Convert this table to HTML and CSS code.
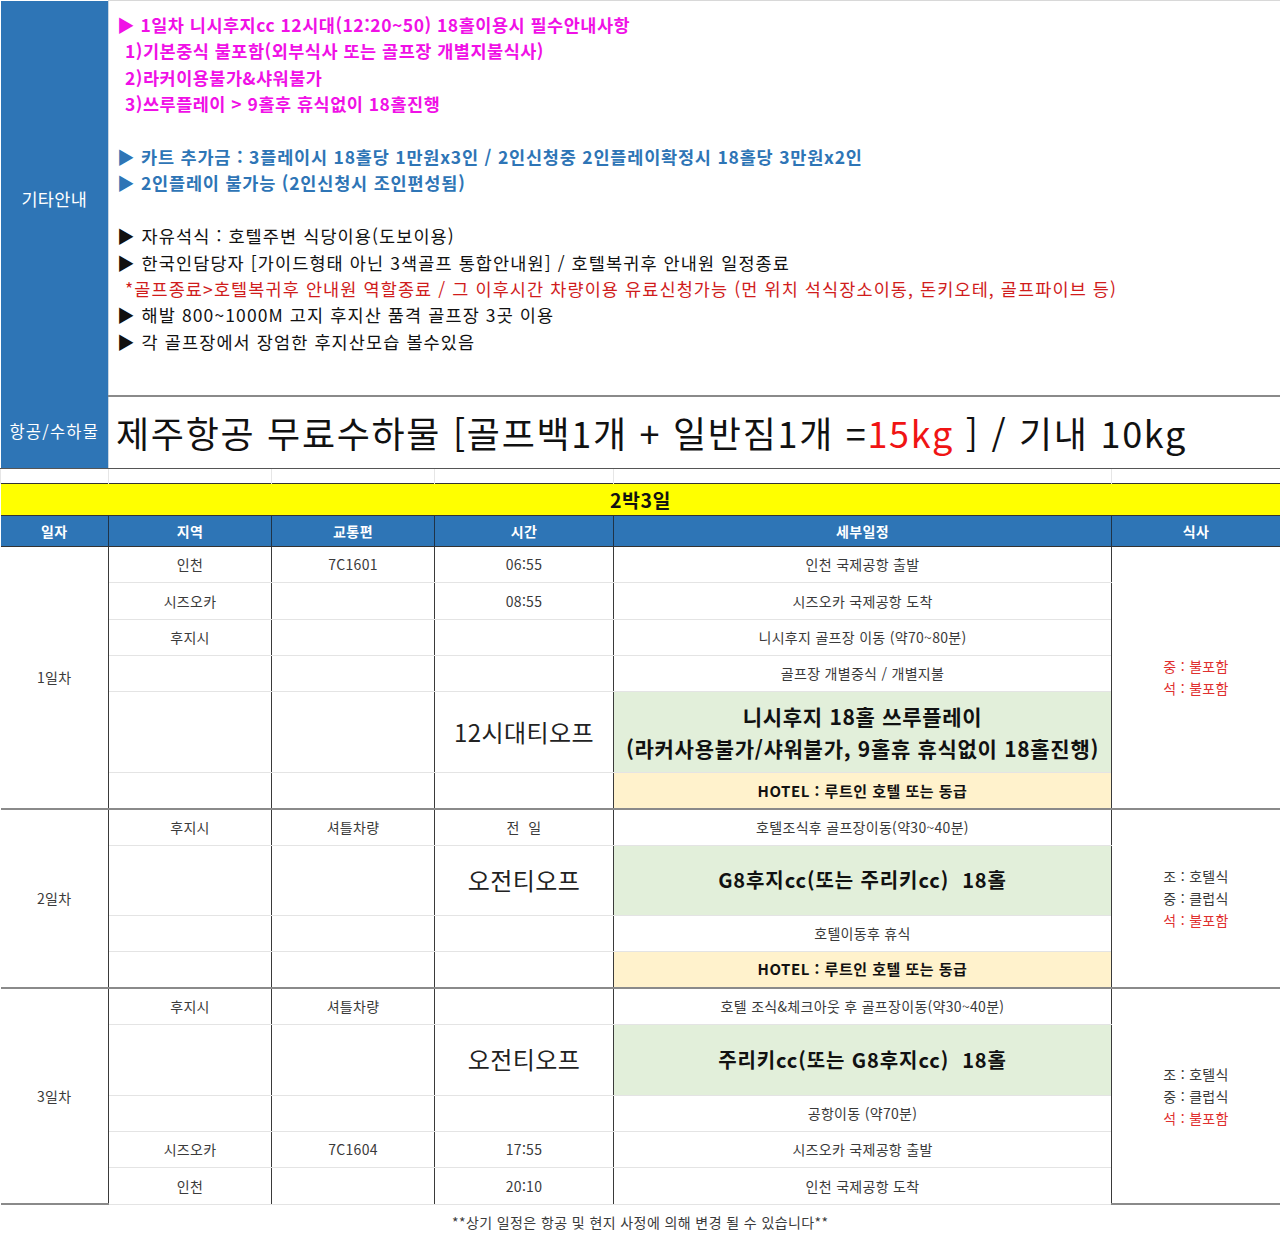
FILE: index.html
```html
<!DOCTYPE html>
<html lang="ko">
<head>
<meta charset="utf-8">
<title>2박3일 일정표</title>
<link rel="stylesheet" href="styles.css">
</head>
<body>
<table class="sheet">
  <colgroup>
    <col class="c1"><col class="c2"><col class="c3"><col class="c4"><col class="c5"><col class="c6">
  </colgroup>
  <tbody>
    <tr class="r-info">
      <th class="side">기타안내</th>
      <td class="info" colspan="5">
        <div class="ln mag">▶ 1일차 니시후지cc 12시대(12:20~50) 18홀이용시 필수안내사항</div>
        <div class="ln mag ind">1)기본중식 불포함(외부식사 또는 골프장 개별지불식사)</div>
        <div class="ln mag ind">2)라커이용불가&amp;샤워불가</div>
        <div class="ln mag ind">3)쓰루플레이 &gt; 9홀후 휴식없이 18홀진행</div>
        <div class="ln"></div>
        <div class="ln blu">▶ 카트 추가금 : 3플레이시 18홀당 1만원x3인 / 2인신청중 2인플레이확정시 18홀당 3만원x2인</div>
        <div class="ln blu">▶ 2인플레이 불가능 (2인신청시 조인편성됨)</div>
        <div class="ln"></div>
        <div class="ln blk">▶ 자유석식 : 호텔주변 식당이용(도보이용)</div>
        <div class="ln blk">▶ 한국인담당자 [가이드형태 아닌 3색골프 통합안내원] / 호텔복귀후 안내원 일정종료</div>
        <div class="ln red ind">*골프종료&gt;호텔복귀후 안내원 역할종료 / 그 이후시간 차량이용 유료신청가능 (먼 위치 석식장소이동, 돈키오테, 골프파이브 등)</div>
        <div class="ln blk">▶ 해발 800~1000M 고지 후지산 품격 골프장 3곳 이용</div>
        <div class="ln blk">▶ 각 골프장에서 장엄한 후지산모습 볼수있음</div>
      </td>
    </tr>
    <tr class="r-air">
      <th class="side side-sm">항공/수하물</th>
      <td class="air" colspan="5">제주항공 무료수하물 [골프백1개 + 일반짐1개 =<span class="kg">15kg</span> ] / 기내 10kg</td>
    </tr>
    <tr class="r-gap">
      <td></td><td></td><td></td><td></td><td></td><td></td>
    </tr>
    <tr class="r-title">
      <td class="title" colspan="6">2박3일</td>
    </tr>
    <tr class="r-head">
      <th>일자</th><th>지역</th><th>교통편</th><th>시간</th><th>세부일정</th><th>식사</th>
    </tr>

    <!-- Day 1 -->
    <tr class="r first">
      <td class="day" rowspan="6">1일차</td>
      <td>인천</td><td>7C1601</td><td>06:55</td><td>인천 국제공항 출발</td>
      <td class="meal" rowspan="6"><div class="red-t">중 : 불포함</div><div class="red-t">석 : 불포함</div></td>
    </tr>
    <tr class="r"><td>시즈오카</td><td></td><td>08:55</td><td>시즈오카 국제공항 도착</td></tr>
    <tr class="r"><td>후지시</td><td></td><td></td><td>니시후지 골프장 이동 (약70~80분)</td></tr>
    <tr class="r"><td></td><td></td><td></td><td>골프장 개별중식 / 개별지불</td></tr>
    <tr class="r r-big1"><td></td><td></td><td class="tee">12시대티오프</td><td class="golf golf2">니시후지 18홀 쓰루플레이<br>(라커사용불가/샤워불가, 9홀휴 휴식없이 18홀진행)</td></tr>
    <tr class="r last"><td></td><td></td><td></td><td class="hotel">HOTEL : 루트인 호텔 또는 동급</td></tr>

    <!-- Day 2 -->
    <tr class="r first">
      <td class="day" rowspan="4">2일차</td>
      <td>후지시</td><td>셔틀차량</td><td>전&nbsp;&nbsp;일</td><td>호텔조식후 골프장이동(약30~40분)</td>
      <td class="meal" rowspan="4"><div>조 : 호텔식</div><div>중 : 클럽식</div><div class="red-t">석 : 불포함</div></td>
    </tr>
    <tr class="r r-big2"><td></td><td></td><td class="tee">오전티오프</td><td class="golf">G8후지cc(또는 주리키cc)&nbsp;&nbsp;18홀</td></tr>
    <tr class="r"><td></td><td></td><td></td><td>호텔이동후 휴식</td></tr>
    <tr class="r last"><td></td><td></td><td></td><td class="hotel">HOTEL : 루트인 호텔 또는 동급</td></tr>

    <!-- Day 3 -->
    <tr class="r first">
      <td class="day" rowspan="5">3일차</td>
      <td>후지시</td><td>셔틀차량</td><td></td><td>호텔 조식&amp;체크아웃 후 골프장이동(약30~40분)</td>
      <td class="meal" rowspan="5"><div>조 : 호텔식</div><div>중 : 클럽식</div><div class="red-t">석 : 불포함</div></td>
    </tr>
    <tr class="r r-big3"><td></td><td></td><td class="tee">오전티오프</td><td class="golf">주리키cc(또는 G8후지cc)&nbsp;&nbsp;18홀</td></tr>
    <tr class="r"><td></td><td></td><td></td><td>공항이동 (약70분)</td></tr>
    <tr class="r"><td>시즈오카</td><td>7C1604</td><td>17:55</td><td>시즈오카 국제공항 출발</td></tr>
    <tr class="r last"><td>인천</td><td></td><td>20:10</td><td>인천 국제공항 도착</td></tr>

    <tr class="r-foot">
      <td colspan="6">**상기 일정은 항공 및 현지 사정에 의해 변경 될 수 있습니다**</td>
    </tr>
  </tbody>
</table>
</body>
</html>
```

FILE: styles.css
```css
html, body {
  margin: 0;
  padding: 0;
  background: #ffffff;
}

body {
  font-family: "Noto Sans CJK KR", "Noto Sans", sans-serif;
  color: #3a3a3a;
}

.sheet {
  width: 1280px;
  table-layout: fixed;
  border-collapse: collapse;
}

.c1 { width: 108px; }
.c2 { width: 163px; }
.c3 { width: 163px; }
.c4 { width: 179px; }
.c5 { width: 498px; }
.c6 { width: 169px; }

.sheet td, .sheet th {
  padding: 0;
  text-align: center;
  vertical-align: middle;
  font-size: 14px;
  font-weight: 400;
  line-height: 1.2;
  letter-spacing: 0.3px;
}

/* ---------- info block ---------- */
.r-info { height: 395px; }
.r-info .side, .r-air .side {
  background: #2e75b6;
  color: #ffffff;
  font-size: 17.5px;
  letter-spacing: 0.3px;
  border-right: 1px solid #c9d6e3;
}
.r-info td.info {
  text-align: left;
  vertical-align: top;
  padding: 11px 0 0 8px;
  border-top: 1px solid #d8d8d8;
  border-right: 1px solid #555;
  border-bottom: 2px solid #8a8a8a;
}
.ln {
  height: 26.4px;
  line-height: 26.4px;
  font-size: 17.5px;
  white-space: nowrap;
  letter-spacing: 0.5px;
}
.ln.ind { padding-left: 8px; }
.mag { color: #f010e6; font-weight: 700; }
.blu { color: #2e75b6; font-weight: 700; letter-spacing: 0.8px; }
.blk { color: #111111; letter-spacing: 1.1px; }
.red { color: #d01c1c; letter-spacing: 1.1px; }

.r-air { height: 73px; }
.r-air .side-sm { font-size: 16.5px; letter-spacing: 1.2px; border-bottom: 1px solid #555; }
.r-air td.air {
  text-align: left;
  padding-left: 7px;
  font-size: 36px;
  color: #111111;
  white-space: nowrap;
  letter-spacing: 1.7px;
  border-right: 1px solid #555;
  border-bottom: 1px solid #555;
}
.kg { color: #f01414; }

.r-gap { height: 15px; }
.r-gap td { border-left: 1px solid #e6e6e6; border-right: 1px solid #e6e6e6; }

.r-title { height: 32px; }
.r-title td.title {
  background: #ffff00;
  color: #111111;
  font-size: 19.5px;
  font-weight: 700;
  letter-spacing: 0.5px;
  border-top: 1px solid #333;
  border-bottom: 1px solid #333;
}

.r-head { height: 31px; }
.r-head th {
  background: #2e75b6;
  color: #ffffff;
  font-weight: 700;
  font-size: 14px;
  letter-spacing: 0.4px;
  border-left: 1px solid #1f3347;
  border-right: 1px solid #1f3347;
  border-bottom: 1px solid #333;
}
.r-head th:first-child { border-left: none; }

/* ---------- schedule rows ---------- */
.r { height: 36.3px; }
.r td {
  border-left: 1px solid #3a3a3a;
  border-right: 1px solid #3a3a3a;
  border-bottom: 1px solid #e4e4e4;
}
.r td.day { border-left: none; }
.r.first td { border-top: 2px solid #8a8a8a; }
.r-head + .r.first td { border-top: 1px solid #333; }
.r td.day, .r td.meal { border-bottom: 2px solid #8a8a8a; }

.r-big1 { height: 81px; }
.r-big2 { height: 70px; }
.r-big3 { height: 71px; }

.tee {
  font-size: 24px !important;
  letter-spacing: 0.4px !important;
  color: #222222;
}
.golf {
  background: #e2efda;
  color: #111111;
  font-size: 20px !important;
  letter-spacing: 0.9px !important;
  font-weight: 700 !important;
}
.golf2 {
  font-size: 21px !important;
  letter-spacing: 0.7px !important;
  line-height: 32px !important;
}
.hotel {
  background: #fff2cc;
  color: #111111;
  font-weight: 700 !important;
  font-size: 15px !important;
  letter-spacing: 0.5px !important;
}
.meal div { line-height: 22px; }
.red-t { color: #e0302f; }

.r-foot { height: 37px; }
.r-foot td {
  letter-spacing: 0.4px;
  border-top: 1px solid #333;
  border-bottom: 1px solid #333;
  border-right: 1px solid #333;
}
```
